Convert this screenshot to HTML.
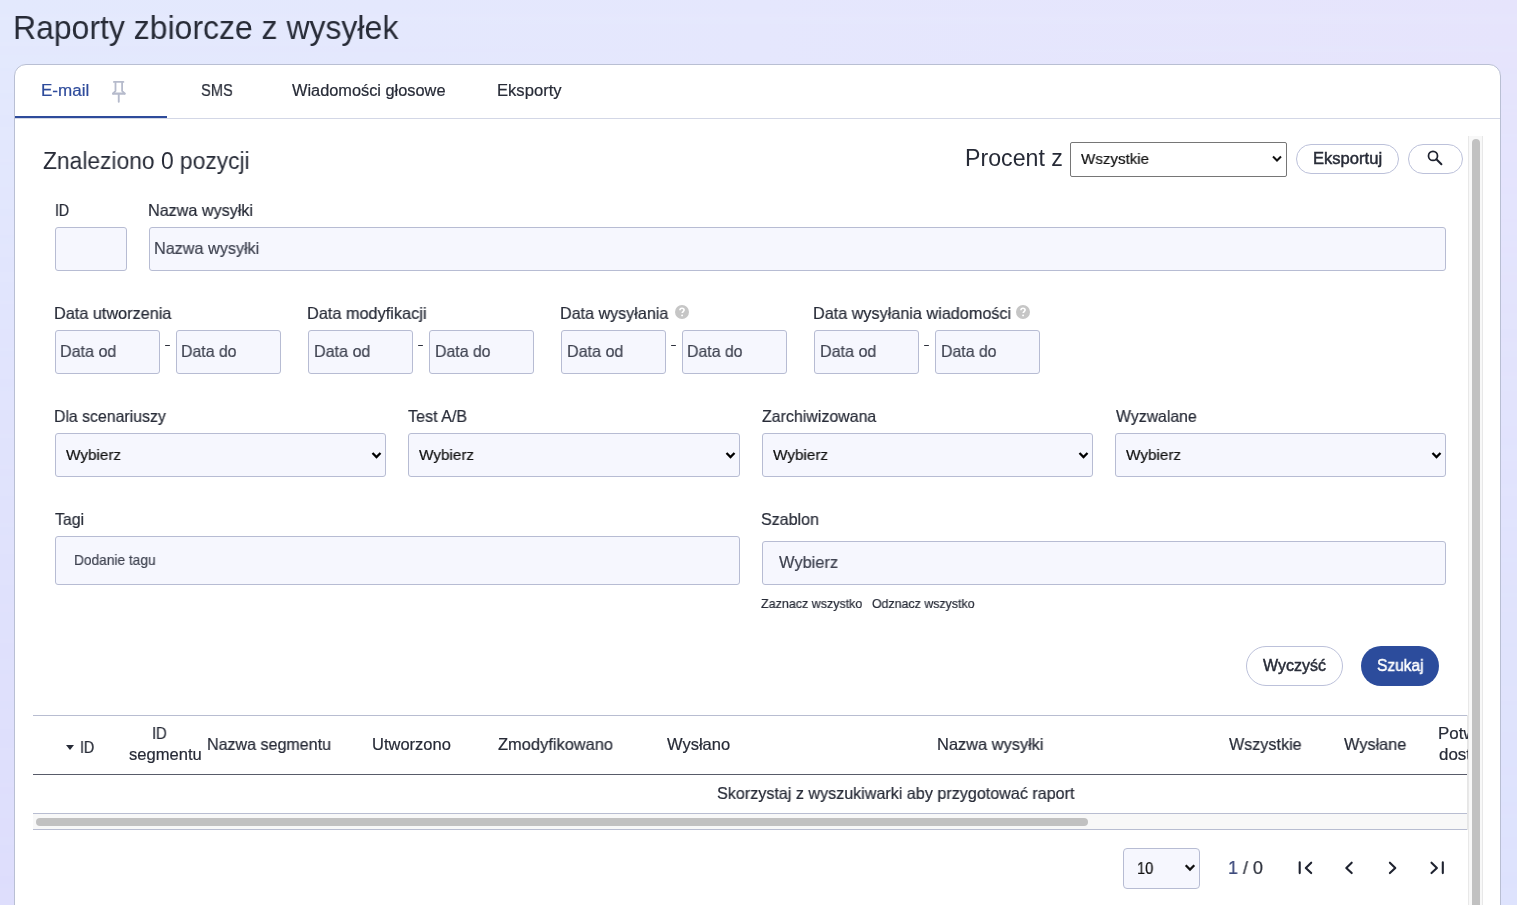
<!DOCTYPE html>
<html lang="pl">
<head>
<meta charset="utf-8">
<title>Raporty zbiorcze z wysyłek</title>
<style>
html,body{margin:0;padding:0;width:1517px;height:905px;overflow:hidden;}
body{position:relative;font-family:"Liberation Sans",sans-serif;
 background:linear-gradient(90deg,#dedefc 0%,#dee3fd 100%);}
.bgr{position:absolute;left:0;top:0;width:1517px;height:905px;
 background:linear-gradient(90deg,#e3e9fd 0%,#e5e7fd 50%,#e6e4fc 100%);
 -webkit-mask-image:linear-gradient(180deg,#000 0%,rgba(0,0,0,0.55) 40%,rgba(0,0,0,0) 100%);mask-image:linear-gradient(180deg,#000 0%,rgba(0,0,0,0.55) 40%,rgba(0,0,0,0) 100%);}
.t{position:absolute;white-space:nowrap;transform-origin:0 0;will-change:transform;-webkit-text-stroke:0.2px currentColor;}
.b{position:absolute;box-sizing:border-box;}
.card{left:14px;top:64px;width:1487px;height:900px;background:#fff;border:1px solid #b9bfd3;border-radius:12px 12px 0 0;}
.inp{background:#f6f7fe;border:1px solid #b7bcd3;border-radius:3px;}
.btn{background:#fff;border:1px solid #bcc1da;border-radius:20px;}
.hl{position:absolute;height:1px;}
.chev{position:absolute;}
</style>
</head>
<body>
<div class="bgr"></div>
<div class="b card"></div>
<!-- tabs -->
<div class="b" style="left:15px;top:116px;width:152px;height:2px;background:#2e4b9b"></div>
<div class="hl" style="left:167px;top:118px;width:1333px;background:#d3d7e6"></div>
<div class="hl" style="left:15px;top:118px;width:152px;background:#d3d7e6"></div>
<svg class="chev" style="left:110px;top:80px" width="18" height="24" viewBox="0 0 18 24">
 <g stroke="#b6bbcc" fill="none" stroke-linecap="round" stroke-linejoin="round">
 <path d="M3.9 1.9H13.4" stroke-width="1.8"/>
 <path d="M5.5 2.2V10.9L3.1 13.6M12.1 2.2V10.9L14.6 13.6" stroke-width="1.8"/>
 <path d="M3.1 13.7H14.6" stroke-width="2.2"/>
 <path d="M8.75 14.5V21.8" stroke-width="1.9"/>
 </g></svg>
<!-- vertical scrollbar -->
<div class="b" style="left:1468px;top:136px;width:15px;height:780px;background:#f8f8f8;border-left:1px solid #e8e8e8;border-right:1px solid #e8e8e8"></div>
<div class="b" style="left:1472px;top:139px;width:8px;height:780px;background:#c1c1c1;border-radius:4px"></div>
<!-- toolbar -->
<div class="b" style="left:1070px;top:142px;width:217px;height:35px;background:#fff;border:1px solid #767676;border-radius:2px"></div>
<svg class="chev" style="left:1271px;top:154px" width="12" height="10" viewBox="0 0 12 10"><path d="M2 2.5l4 4 4-4" stroke="#111" stroke-width="2" fill="none"/></svg>
<div class="b btn" style="left:1296px;top:144px;width:103px;height:30px;border-radius:15px"></div>
<div class="b btn" style="left:1408px;top:144px;width:55px;height:30px;border-radius:15px"></div>
<svg class="chev" style="left:1425px;top:149px" width="20" height="20" viewBox="0 0 20 20"><circle cx="8" cy="6.9" r="4.5" stroke="#1f2330" stroke-width="1.75" fill="none"/><path d="M11.4 10.3l5 5" stroke="#1f2330" stroke-width="2" stroke-linecap="round"/></svg>
<!-- inputs row 1 -->
<div class="b inp" style="left:55px;top:227px;width:72px;height:44px"></div>
<div class="b inp" style="left:149px;top:227px;width:1297px;height:44px"></div>
<!-- date row -->
<div class="b inp" style="left:55px;top:330px;width:105px;height:44px"></div>
<div class="b inp" style="left:176px;top:330px;width:105px;height:44px"></div>
<div class="b inp" style="left:308px;top:330px;width:105px;height:44px"></div>
<div class="b inp" style="left:429px;top:330px;width:105px;height:44px"></div>
<div class="b inp" style="left:561px;top:330px;width:105px;height:44px"></div>
<div class="b inp" style="left:682px;top:330px;width:105px;height:44px"></div>
<div class="b inp" style="left:814px;top:330px;width:105px;height:44px"></div>
<div class="b inp" style="left:935px;top:330px;width:105px;height:44px"></div>
<div class="b" style="left:165px;top:344.8px;width:5.2px;height:1.3px;background:#2c303c;border-radius:1px"></div>
<div class="b" style="left:418px;top:344.8px;width:5.2px;height:1.3px;background:#2c303c;border-radius:1px"></div>
<div class="b" style="left:671px;top:344.8px;width:5.2px;height:1.3px;background:#2c303c;border-radius:1px"></div>
<div class="b" style="left:924px;top:344.8px;width:5.2px;height:1.3px;background:#2c303c;border-radius:1px"></div>
<svg class="chev" style="left:675px;top:305px" width="14" height="14" viewBox="0 0 14 14"><circle cx="7" cy="7" r="7" fill="#c6c6c6"/><path d="M4.9 5.3c0-1.3.9-2.1 2.1-2.1s2.1.8 2.1 1.9c0 1.4-1.9 1.5-1.9 3" stroke="#fff" stroke-width="1.6" fill="none"/><circle cx="7.1" cy="10.4" r="0.95" fill="#fff"/></svg>
<svg class="chev" style="left:1016px;top:305px" width="14" height="14" viewBox="0 0 14 14"><circle cx="7" cy="7" r="7" fill="#c6c6c6"/><path d="M4.9 5.3c0-1.3.9-2.1 2.1-2.1s2.1.8 2.1 1.9c0 1.4-1.9 1.5-1.9 3" stroke="#fff" stroke-width="1.6" fill="none"/><circle cx="7.1" cy="10.4" r="0.95" fill="#fff"/></svg>
<!-- selects row -->
<div class="b inp" style="left:55px;top:433px;width:331px;height:44px"></div>
<div class="b inp" style="left:408px;top:433px;width:332px;height:44px"></div>
<div class="b inp" style="left:762px;top:433px;width:331px;height:44px"></div>
<div class="b inp" style="left:1115px;top:433px;width:331px;height:44px"></div>
<svg class="chev" style="left:370.5px;top:451px" width="11" height="9" viewBox="0 0 11 9"><path d="M1.5 2l4 4 4-4" stroke="#000" stroke-width="2.3" fill="none"/></svg>
<svg class="chev" style="left:724.5px;top:451px" width="11" height="9" viewBox="0 0 11 9"><path d="M1.5 2l4 4 4-4" stroke="#000" stroke-width="2.3" fill="none"/></svg>
<svg class="chev" style="left:1077.5px;top:451px" width="11" height="9" viewBox="0 0 11 9"><path d="M1.5 2l4 4 4-4" stroke="#000" stroke-width="2.3" fill="none"/></svg>
<svg class="chev" style="left:1430.5px;top:451px" width="11" height="9" viewBox="0 0 11 9"><path d="M1.5 2l4 4 4-4" stroke="#000" stroke-width="2.3" fill="none"/></svg>
<!-- tags / template -->
<div class="b inp" style="left:55px;top:536px;width:685px;height:49px"></div>
<div class="b inp" style="left:762px;top:541px;width:684px;height:44px"></div>
<!-- buttons -->
<div class="b btn" style="left:1246px;top:646px;width:97px;height:40px"></div>
<div class="b" style="left:1361px;top:646px;width:78px;height:40px;background:#2c4c9c;border-radius:20px"></div>
<!-- table -->
<div class="hl" style="left:33px;top:715px;width:1435px;background:#b8bdd1"></div>
<div class="hl" style="left:33px;top:774px;width:1435px;height:1px;background:#585b69"></div>
<svg class="chev" style="left:65px;top:744px" width="10" height="7" viewBox="0 0 10 7"><path d="M1 1h8l-4 5z" fill="#272b37"/></svg>
<div class="hl" style="left:33px;top:813px;width:1435px;background:#b8bdd1"></div>
<div class="b" style="left:33px;top:814px;width:1435px;height:15px;background:#f8f8f8"></div>
<div class="b" style="left:36px;top:818px;width:1052px;height:8px;background:#c1c1c1;border-radius:4px"></div>
<div class="hl" style="left:33px;top:829px;width:1435px;background:#b8bdd1"></div>
<div class="b" style="left:1467px;top:715px;width:1px;height:115px;background:#e6e6e6"></div>
<!-- pagination -->
<div class="b inp" style="left:1123px;top:848px;width:77px;height:41px;border-radius:4px"></div>
<svg class="chev" style="left:1184px;top:863px" width="12" height="10" viewBox="0 0 12 10"><path d="M1.7 2.3l4.3 4.3 4.3-4.3" stroke="#111" stroke-width="2.3" fill="none"/></svg>
<svg class="chev" style="left:1290px;top:855px" width="160" height="25" viewBox="1290 855 160 25">
 <g stroke="#1f2330" stroke-width="2.1" fill="none" stroke-linecap="round" stroke-linejoin="round">
  <path d="M1299.7 862.2v10.9M1311.2 862.7l-5.4 5.2 5.4 5.2"/>
  <path d="M1351.7 862.7l-5.4 5.2 5.4 5.2"/>
  <path d="M1389.9 862.7l5.4 5.2-5.4 5.2"/>
  <path d="M1431.5 862.7l5.4 5.2-5.4 5.2M1442.8 862.2v10.9"/>
 </g>
</svg>
<span class="t" style="left:13.30px;top:12px;font-size:32.5px;line-height:32.5px;color:#272b37;font-weight:400;transform:scaleX(0.9832);-webkit-text-stroke:0;">Raporty zbiorcze z wysyłek</span>
<span class="t" style="left:40.55px;top:83px;font-size:16px;line-height:16px;color:#2e4b9b;font-weight:400;transform:scaleX(1.0631);">E-mail</span>
<span class="t" style="left:200.71px;top:83px;font-size:16px;line-height:16px;color:#272b37;font-weight:400;transform:scaleX(0.9162);">SMS</span>
<span class="t" style="left:292.00px;top:83px;font-size:16px;line-height:16px;color:#272b37;font-weight:400;transform:scaleX(1.0213);">Wiadomości głosowe</span>
<span class="t" style="left:497.24px;top:83px;font-size:16px;line-height:16px;color:#272b37;font-weight:400;transform:scaleX(1.0374);">Eksporty</span>
<span class="t" style="left:43.29px;top:150px;font-size:23px;line-height:23px;color:#272b37;font-weight:400;transform:scaleX(0.9913);-webkit-text-stroke:0;">Znaleziono 0 pozycji</span>
<span class="t" style="left:964.59px;top:147px;font-size:23px;line-height:23px;color:#272b37;font-weight:400;transform:scaleX(1.0072);-webkit-text-stroke:0;">Procent z</span>
<span class="t" style="left:1081.23px;top:151px;font-size:15.5px;line-height:15.5px;color:#111;font-weight:400;transform:scaleX(0.9735);">Wszystkie</span>
<span class="t" style="left:1312.77px;top:151px;font-size:16px;line-height:16px;color:#272b37;font-weight:400;transform:scaleX(1.0356);-webkit-text-stroke:0.45px currentColor;">Eksportuj</span>
<span class="t" style="left:54.70px;top:202px;font-size:16.5px;line-height:16.5px;color:#272b37;font-weight:400;transform:scaleX(0.8539);">ID</span>
<span class="t" style="left:147.72px;top:202px;font-size:16.5px;line-height:16.5px;color:#272b37;font-weight:400;transform:scaleX(0.9793);">Nazwa wysyłki</span>
<span class="t" style="left:154.14px;top:240px;font-size:16.5px;line-height:16.5px;color:#3e4250;font-weight:400;transform:scaleX(0.9822);">Nazwa wysyłki</span>
<span class="t" style="left:54.12px;top:305px;font-size:16.5px;line-height:16.5px;color:#272b37;font-weight:400;transform:scaleX(0.9848);">Data utworzenia</span>
<span class="t" style="left:60.20px;top:343px;font-size:16.5px;line-height:16.5px;color:#3e4250;font-weight:400;transform:scaleX(0.9752);">Data od</span>
<span class="t" style="left:181.47px;top:343px;font-size:16.5px;line-height:16.5px;color:#3e4250;font-weight:400;transform:scaleX(0.9612);">Data do</span>
<span class="t" style="left:307.49px;top:305px;font-size:16.5px;line-height:16.5px;color:#272b37;font-weight:400;transform:scaleX(0.9871);">Data modyfikacji</span>
<span class="t" style="left:313.59px;top:343px;font-size:16.5px;line-height:16.5px;color:#3e4250;font-weight:400;transform:scaleX(0.9754);">Data od</span>
<span class="t" style="left:434.87px;top:343px;font-size:16.5px;line-height:16.5px;color:#3e4250;font-weight:400;transform:scaleX(0.9612);">Data do</span>
<span class="t" style="left:559.93px;top:305px;font-size:16.5px;line-height:16.5px;color:#272b37;font-weight:400;transform:scaleX(0.9765);">Data wysyłania</span>
<span class="t" style="left:566.99px;top:343px;font-size:16.5px;line-height:16.5px;color:#3e4250;font-weight:400;transform:scaleX(0.9754);">Data od</span>
<span class="t" style="left:687.27px;top:343px;font-size:16.5px;line-height:16.5px;color:#3e4250;font-weight:400;transform:scaleX(0.9612);">Data do</span>
<span class="t" style="left:813.49px;top:305px;font-size:16.5px;line-height:16.5px;color:#272b37;font-weight:400;transform:scaleX(0.9820);">Data wysyłania wiadomości</span>
<span class="t" style="left:819.59px;top:343px;font-size:16.5px;line-height:16.5px;color:#3e4250;font-weight:400;transform:scaleX(0.9754);">Data od</span>
<span class="t" style="left:940.87px;top:343px;font-size:16.5px;line-height:16.5px;color:#3e4250;font-weight:400;transform:scaleX(0.9612);">Data do</span>
<span class="t" style="left:53.99px;top:408px;font-size:16.5px;line-height:16.5px;color:#272b37;font-weight:400;transform:scaleX(0.9598);">Dla scenariuszy</span>
<span class="t" style="left:66.44px;top:447px;font-size:15.5px;line-height:15.5px;color:#111;font-weight:400;transform:scaleX(0.9870);">Wybierz</span>
<span class="t" style="left:408.35px;top:408px;font-size:16.5px;line-height:16.5px;color:#272b37;font-weight:400;transform:scaleX(0.9754);">Test A/B</span>
<span class="t" style="left:419.44px;top:447px;font-size:15.5px;line-height:15.5px;color:#111;font-weight:400;transform:scaleX(0.9870);">Wybierz</span>
<span class="t" style="left:761.88px;top:408px;font-size:16.5px;line-height:16.5px;color:#272b37;font-weight:400;transform:scaleX(0.9664);">Zarchiwizowana</span>
<span class="t" style="left:773.44px;top:447px;font-size:15.5px;line-height:15.5px;color:#111;font-weight:400;transform:scaleX(0.9870);">Wybierz</span>
<span class="t" style="left:1115.60px;top:408px;font-size:16.5px;line-height:16.5px;color:#272b37;font-weight:400;transform:scaleX(0.9587);">Wyzwalane</span>
<span class="t" style="left:1126.44px;top:447px;font-size:15.5px;line-height:15.5px;color:#111;font-weight:400;transform:scaleX(0.9870);">Wybierz</span>
<span class="t" style="left:55.15px;top:511px;font-size:16.5px;line-height:16.5px;color:#272b37;font-weight:400;transform:scaleX(0.9612);">Tagi</span>
<span class="t" style="left:760.96px;top:511px;font-size:16.5px;line-height:16.5px;color:#272b37;font-weight:400;transform:scaleX(0.9712);">Szablon</span>
<span class="t" style="left:73.86px;top:553px;font-size:14.5px;line-height:14.5px;color:#3e4250;font-weight:400;transform:scaleX(0.9453);">Dodanie tagu</span>
<span class="t" style="left:778.80px;top:554px;font-size:16.5px;line-height:16.5px;color:#3e4250;font-weight:400;transform:scaleX(0.9931);">Wybierz</span>
<span class="t" style="left:761.00px;top:597px;font-size:13px;line-height:13px;color:#272b37;font-weight:400;transform:scaleX(0.9599);">Zaznacz wszystko</span>
<span class="t" style="left:871.63px;top:597px;font-size:13px;line-height:13px;color:#272b37;font-weight:400;transform:scaleX(0.9523);">Odznacz wszystko</span>
<span class="t" style="left:1263.38px;top:658px;font-size:16px;line-height:16px;color:#272b37;font-weight:400;transform:scaleX(0.9988);-webkit-text-stroke:0.45px currentColor;">Wyczyść</span>
<span class="t" style="left:1376.61px;top:658px;font-size:16px;line-height:16px;color:#fff;font-weight:400;transform:scaleX(0.9698);-webkit-text-stroke:0.45px currentColor;">Szukaj</span>
<span class="t" style="left:80.38px;top:739px;font-size:16.5px;line-height:16.5px;color:#272b37;font-weight:400;transform:scaleX(0.8676);">ID</span>
<span class="t" style="left:151.65px;top:725px;font-size:16.5px;line-height:16.5px;color:#272b37;font-weight:400;transform:scaleX(0.8949);">ID</span>
<span class="t" style="left:128.74px;top:746px;font-size:16.5px;line-height:16.5px;color:#272b37;font-weight:400;transform:scaleX(1.0043);">segmentu</span>
<span class="t" style="left:207.34px;top:736px;font-size:16.5px;line-height:16.5px;color:#272b37;font-weight:400;transform:scaleX(0.9730);">Nazwa segmentu</span>
<span class="t" style="left:372.37px;top:736px;font-size:16.5px;line-height:16.5px;color:#272b37;font-weight:400;transform:scaleX(0.9994);">Utworzono</span>
<span class="t" style="left:497.89px;top:736px;font-size:16.5px;line-height:16.5px;color:#272b37;font-weight:400;transform:scaleX(0.9956);">Zmodyfikowano</span>
<span class="t" style="left:667.00px;top:736px;font-size:16.5px;line-height:16.5px;color:#272b37;font-weight:400;transform:scaleX(0.9993);">Wysłano</span>
<span class="t" style="left:936.90px;top:736px;font-size:16.5px;line-height:16.5px;color:#272b37;font-weight:400;transform:scaleX(0.9938);">Nazwa wysyłki</span>
<span class="t" style="left:1229.15px;top:736px;font-size:16.5px;line-height:16.5px;color:#272b37;font-weight:400;transform:scaleX(0.9780);">Wszystkie</span>
<span class="t" style="left:1344.20px;top:736px;font-size:16.5px;line-height:16.5px;color:#272b37;font-weight:400;transform:scaleX(0.9871);">Wysłane</span>
<span class="t" style="left:717.38px;top:785px;font-size:16.5px;line-height:16.5px;color:#272b37;font-weight:400;transform:scaleX(0.9770);">Skorzystaj z wyszukiwarki aby przygotować raport</span>
<span class="t" style="left:1136.59px;top:861px;font-size:16px;line-height:16px;color:#111;font-weight:400;transform:scaleX(0.9086);">10</span>
<span class="t" style="left:1228.18px;top:859px;font-size:18.5px;line-height:18.5px;color:#272b37;font-weight:400;transform:scaleX(0.9686);"><span style="color:#3d4a7c">1</span> / 0</span>
<div style="position:absolute;left:0;top:0;width:1468px;height:905px;overflow:hidden">
<span class="t" style="left:1438.08px;top:725px;font-size:16.5px;line-height:16.5px;color:#272b37;font-weight:400;transform:scaleX(1.0254);">Potw</span>
<span class="t" style="left:1439.37px;top:746px;font-size:16.5px;line-height:16.5px;color:#272b37;font-weight:400;transform:scaleX(1.0251);">dost</span>
</div>
</body>
</html>
